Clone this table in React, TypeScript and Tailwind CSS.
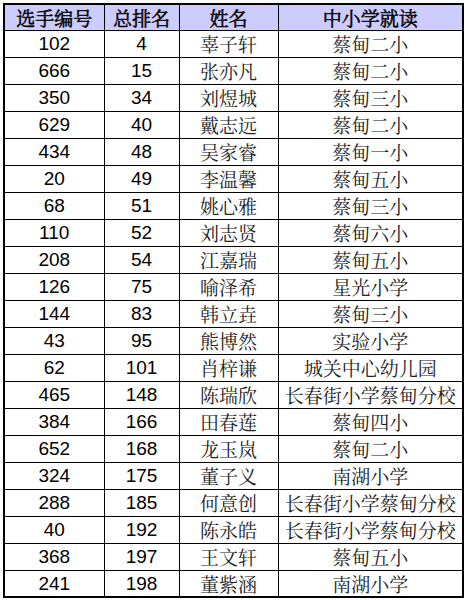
const rows: [string, string, string, string][] = [
  ['102', '4', '辜子轩', '蔡甸二小'],
  ['666', '15', '张亦凡', '蔡甸二小'],
  ['350', '34', '刘煜城', '蔡甸三小'],
  ['629', '40', '戴志远', '蔡甸二小'],
  ['434', '48', '吴家睿', '蔡甸一小'],
  ['20', '49', '李温馨', '蔡甸五小'],
  ['68', '51', '姚心雅', '蔡甸三小'],
  ['110', '52', '刘志贤', '蔡甸六小'],
  ['208', '54', '江嘉瑞', '蔡甸五小'],
  ['126', '75', '喻泽希', '星光小学'],
  ['144', '83', '韩立垚', '蔡甸三小'],
  ['43', '95', '熊博然', '实验小学'],
  ['62', '101', '肖梓谦', '城关中心幼儿园'],
  ['465', '148', '陈瑞欣', '长春街小学蔡甸分校'],
  ['384', '166', '田春莲', '蔡甸四小'],
  ['652', '168', '龙玉岚', '蔡甸二小'],
  ['324', '175', '董子义', '南湖小学'],
  ['288', '185', '何意创', '长春街小学蔡甸分校'],
  ['40', '192', '陈永皓', '长春街小学蔡甸分校'],
  ['368', '197', '王文轩', '蔡甸五小'],
  ['241', '198', '董紫涵', '南湖小学'],
]

const serif = "font-['Noto_Serif_CJK_SC','Liberation_Serif','Noto_Sans_CJK_SC',serif]"
const num = "font-['Liberation_Sans','Noto_Sans_CJK_SC',sans-serif]"
const th = `border border-black p-0 font-normal [-webkit-text-stroke:0.5px_#000] ${serif}`

export default function App() {
  return (
    <div className="w-[467px] h-[600px] bg-white pl-[3px] pt-[3px]">
      <table className="border-collapse border-2 border-black text-[19px] leading-none text-black">
        <thead>
          <tr className="h-[26px] bg-[#ccccff]">
            <th className={`w-[100px] ${th}`}>选手编号</th>
            <th className={`w-[75px] ${th}`}>总排名</th>
            <th className={`w-[99px] ${th}`}>姓名</th>
            <th className={`w-[185px] ${th}`}>中小学就读</th>
          </tr>
        </thead>
        <tbody>
          {rows.map((r) => (
            <tr key={r[0]} className="h-[27px]">
              <td className={`border border-black p-0 text-center ${num}`}>{r[0]}</td>
              <td className={`border border-black p-0 text-center ${num}`}>{r[1]}</td>
              <td className={`border border-black p-0 text-center text-[#222] ${serif}`}>{r[2]}</td>
              <td className={`border border-black p-0 text-center text-[#222] whitespace-nowrap ${serif}`}>{r[3]}</td>
            </tr>
          ))}
        </tbody>
      </table>
    </div>
  )
}
